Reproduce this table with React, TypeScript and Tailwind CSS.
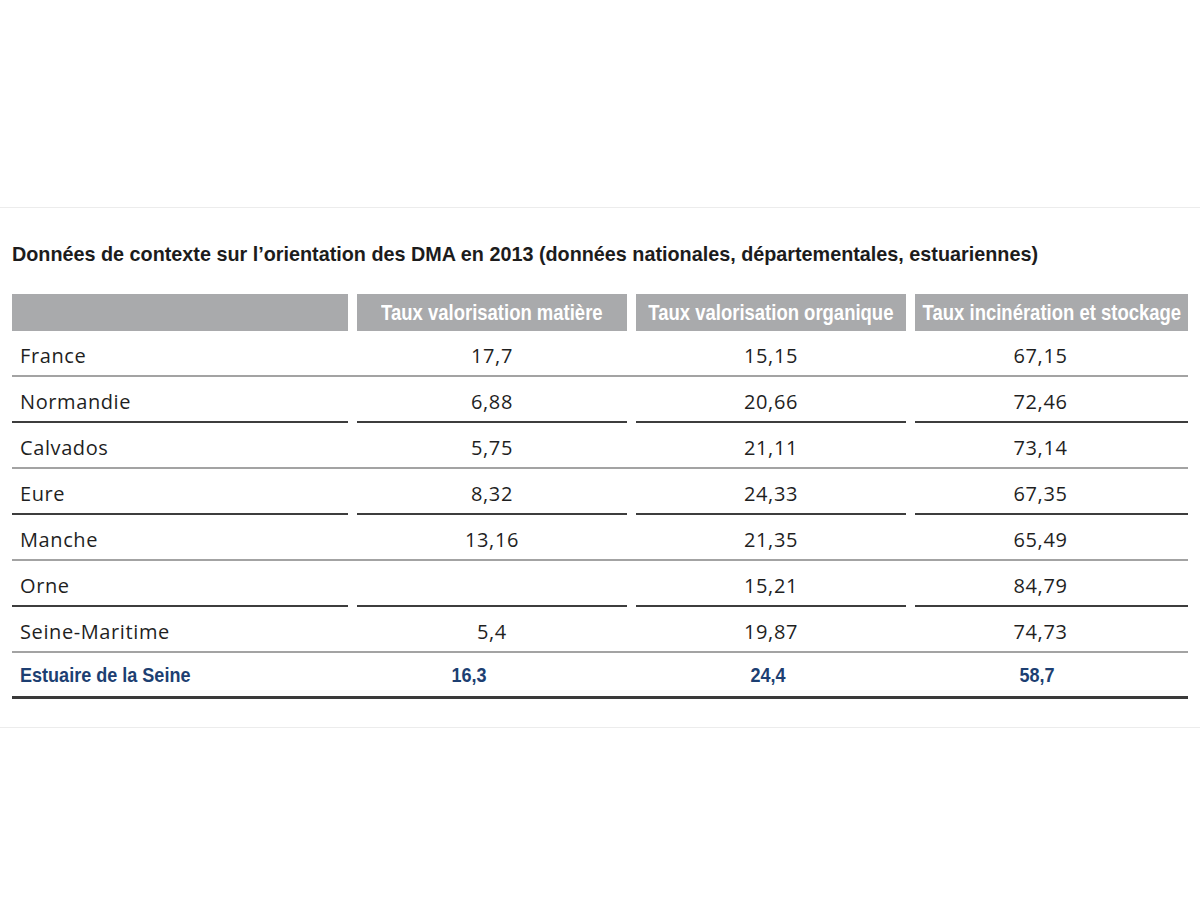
const columns = [
  "Taux valorisation matière",
  "Taux valorisation organique",
  "Taux incinération et stockage",
];

const rows: { label: string; values: string[]; split: boolean }[] = [
  { label: "France", values: ["17,7", "15,15", "67,15"], split: false },
  { label: "Normandie", values: ["6,88", "20,66", "72,46"], split: true },
  { label: "Calvados", values: ["5,75", "21,11", "73,14"], split: false },
  { label: "Eure", values: ["8,32", "24,33", "67,35"], split: true },
  { label: "Manche", values: ["13,16", "21,35", "65,49"], split: false },
  { label: "Orne", values: ["", "15,21", "84,79"], split: true },
  { label: "Seine-Maritime", values: ["5,4", "19,87", "74,73"], split: false },
];

const grid = "grid grid-cols-[336px_270px_270px_273px] gap-x-[9px]";
const sans = "font-['Liberation_Sans',Arial,sans-serif]";
const body = "font-['Open_Sans',sans-serif]";

export default function App() {
  return (
    <div className="min-h-[900px] bg-white pt-[207px]">
      <section className="border-y border-[#ececec] px-3 pb-[28px]">
        <h1 className={`mt-[34px] ${sans} text-[19.8px] font-bold leading-6 text-[#1c1c1c]`}>
          Données de contexte sur l’orientation des DMA en 2013 (données nationales, départementales, estuariennes)
        </h1>

        <div className="mt-[28px] w-[1176px]">
          <div className={`${grid} h-[37px]`}>
            <div className="bg-[#a9aaac]" />
            {columns.map((c) => (
              <div
                key={c}
                className={`flex items-center justify-center overflow-hidden whitespace-nowrap bg-[#a9aaac] ${sans} text-[22px] font-bold text-white`}
              >
                <span className="inline-block scale-x-[0.84]">{c}</span>
              </div>
            ))}
          </div>

          {rows.map((r) => {
            const line = r.split ? "border-b-2 border-[#3d3d3d]" : "";
            return (
              <div
                key={r.label}
                className={`${grid} h-[46px] ${r.split ? "" : "border-b-2 border-[#a3a3a3]"} ${body} text-[20px] tracking-[0.6px] text-[#1f1f1f]`}
              >
                <div className={`flex items-center pl-2 pt-[5px] ${line}`}>{r.label}</div>
                {r.values.map((v, i) => (
                  <div
                    key={i}
                    className={`flex items-center justify-center pt-[5px] ${line} ${i === 2 ? "pr-[22px]" : ""}`}
                  >
                    {v}
                  </div>
                ))}
              </div>
            );
          })}

          <div
            className={`${grid} h-[46px] border-b-[3px] border-[#3a3a3a] ${sans} text-[20.5px] font-bold text-[#1d3f72]`}
          >
            <div className="flex items-center pl-2 pt-[2px]">
              <span className="inline-block origin-left scale-x-[0.88]">Estuaire de la Seine</span>
            </div>
            <div className="flex items-center justify-center pt-[2px] pr-[46px]">
              <span className="inline-block scale-x-[0.88]">16,3</span>
            </div>
            <div className="flex items-center justify-center pt-[2px] pr-[6px]">
              <span className="inline-block scale-x-[0.88]">24,4</span>
            </div>
            <div className="flex items-center justify-center pt-[2px] pr-[30px]">
              <span className="inline-block scale-x-[0.88]">58,7</span>
            </div>
          </div>
        </div>
      </section>
    </div>
  );
}
